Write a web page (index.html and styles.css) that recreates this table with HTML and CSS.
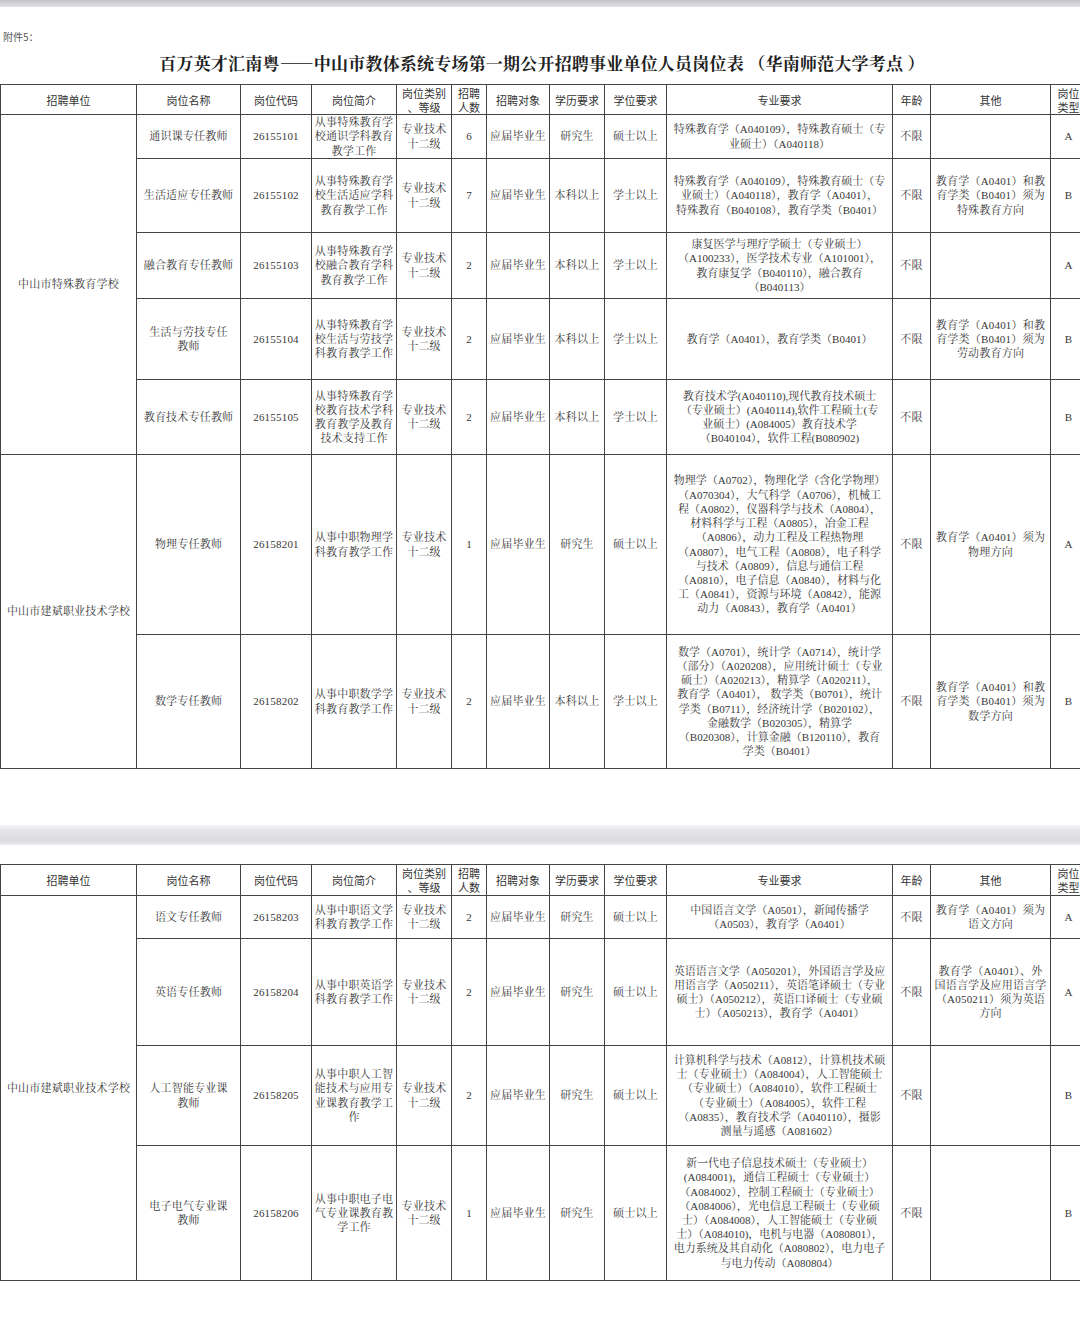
FILE: index.html
```html
<!DOCTYPE html>
<html lang="zh-CN">
<head>
<meta charset="utf-8">
<title>岗位表</title>
<link rel="stylesheet" href="styles.css">
</head>
<body>
<div class="sheet">
  <div class="topbar"></div>
  <p class="note">附件5：</p>
  <h1 class="title">百万英才汇南粤——中山市教体系统专场第一期公开招聘事业单位人员岗位表 （华南师范大学考点 ）</h1>

  <table class="grid">
    <colgroup>
      <col class="c1"><col class="c2"><col class="c3"><col class="c4"><col class="c5"><col class="c6"><col class="c7"><col class="c8"><col class="c9"><col class="c10"><col class="c11"><col class="c12"><col class="c13">
    </colgroup>
    <thead>
      <tr class="hd1">
        <th>招聘单位</th><th>岗位名称</th><th>岗位代码</th><th>岗位简介</th><th>岗位类别<br>、等级</th><th>招聘<br>人数</th><th>招聘对象</th><th>学历要求</th><th>学位要求</th><th>专业要求</th><th>年龄</th><th>其他</th><th>岗位<br>类型</th>
      </tr>
    </thead>
    <tbody>
      <tr class="r1">
        <td rowspan="5">中山市特殊教育学校</td>
        <td>通识课专任教师</td><td>26155101</td>
        <td>从事特殊教育学<br>校通识学科教育<br>教学工作</td>
        <td>专业技术<br>十二级</td><td>6</td><td>应届毕业生</td><td>研究生</td><td>硕士以上</td>
        <td class="major">特殊教育学（A040109），特殊教育硕士（专<br>业硕士）（A040118）</td>
        <td>不限</td><td></td><td>A</td>
      </tr>
      <tr class="r2">
        <td>生活适应专任教师</td><td>26155102</td>
        <td>从事特殊教育学<br>校生活适应学科<br>教育教学工作</td>
        <td>专业技术<br>十二级</td><td>7</td><td>应届毕业生</td><td>本科以上</td><td>学士以上</td>
        <td class="major">特殊教育学（A040109），特殊教育硕士（专<br>业硕士）（A040118），教育学（A0401），<br>特殊教育（B040108），教育学类（B0401）</td>
        <td>不限</td><td>教育学（A0401）和教<br>育学类（B0401）须为<br>特殊教育方向</td><td>B</td>
      </tr>
      <tr class="r3">
        <td>融合教育专任教师</td><td>26155103</td>
        <td>从事特殊教育学<br>校融合教育学科<br>教育教学工作</td>
        <td>专业技术<br>十二级</td><td>2</td><td>应届毕业生</td><td>本科以上</td><td>学士以上</td>
        <td class="major">康复医学与理疗学硕士（专业硕士）<br>（A100233），医学技术专业（A101001），<br>教育康复学（B040110），融合教育<br>（B040113）</td>
        <td>不限</td><td></td><td>A</td>
      </tr>
      <tr class="r4">
        <td>生活与劳技专任<br>教师</td><td>26155104</td>
        <td>从事特殊教育学<br>校生活与劳技学<br>科教育教学工作</td>
        <td>专业技术<br>十二级</td><td>2</td><td>应届毕业生</td><td>本科以上</td><td>学士以上</td>
        <td class="major">教育学（A0401），教育学类（B0401）</td>
        <td>不限</td><td>教育学（A0401）和教<br>育学类（B0401）须为<br>劳动教育方向</td><td>B</td>
      </tr>
      <tr class="r5">
        <td>教育技术专任教师</td><td>26155105</td>
        <td>从事特殊教育学<br>校教育技术学科<br>教育教学及教育<br>技术支持工作</td>
        <td>专业技术<br>十二级</td><td>2</td><td>应届毕业生</td><td>本科以上</td><td>学士以上</td>
        <td class="major">教育技术学(A040110),现代教育技术硕士<br>（专业硕士）(A040114),软件工程硕士(专<br>业硕士）(A084005）教育技术学<br>（B040104），软件工程(B080902)</td>
        <td>不限</td><td></td><td>B</td>
      </tr>
      <tr class="r6">
        <td rowspan="2">中山市建斌职业技术学校</td>
        <td>物理专任教师</td><td>26158201</td>
        <td>从事中职物理学<br>科教育教学工作</td>
        <td>专业技术<br>十二级</td><td>1</td><td>应届毕业生</td><td>研究生</td><td>硕士以上</td>
        <td class="major">物理学（A0702），物理化学（含化学物理）<br>（A070304），大气科学（A0706），机械工<br>程（A0802），仪器科学与技术（A0804），<br>材料科学与工程（A0805），冶金工程<br>（A0806），动力工程及工程热物理<br>（A0807），电气工程（A0808），电子科学<br>与技术（A0809），信息与通信工程<br>（A0810），电子信息（A0840），材料与化<br>工（A0841），资源与环境（A0842），能源<br>动力（A0843），教育学（A0401）</td>
        <td>不限</td><td>教育学（A0401）须为<br>物理方向</td><td>A</td>
      </tr>
      <tr class="r7">
        <td>数学专任教师</td><td>26158202</td>
        <td>从事中职数学学<br>科教育教学工作</td>
        <td>专业技术<br>十二级</td><td>2</td><td>应届毕业生</td><td>本科以上</td><td>学士以上</td>
        <td class="major">数学（A0701），统计学（A0714），统计学<br>（部分）（A020208），应用统计硕士（专业<br>硕士）（A020213），精算学（A020211），<br>教育学（A0401）， 数学类（B0701），统计<br>学类（B0711），经济统计学（B020102），<br>金融数学（B020305），精算学<br>（B020308），计算金融（B120110），教育<br>学类（B0401）</td>
        <td>不限</td><td>教育学（A0401）和教<br>育学类（B0401）须为<br>数学方向</td><td>B</td>
      </tr>
    </tbody>
  </table>

  <div class="sep"></div>

  <table class="grid grid2">
    <colgroup>
      <col class="c1"><col class="c2"><col class="c3"><col class="c4"><col class="c5"><col class="c6"><col class="c7"><col class="c8"><col class="c9"><col class="c10"><col class="c11"><col class="c12"><col class="c13">
    </colgroup>
    <thead>
      <tr class="hd2">
        <th>招聘单位</th><th>岗位名称</th><th>岗位代码</th><th>岗位简介</th><th>岗位类别<br>、等级</th><th>招聘<br>人数</th><th>招聘对象</th><th>学历要求</th><th>学位要求</th><th>专业要求</th><th>年龄</th><th>其他</th><th>岗位<br>类型</th>
      </tr>
    </thead>
    <tbody>
      <tr class="s1">
        <td rowspan="4">中山市建斌职业技术学校</td>
        <td>语文专任教师</td><td>26158203</td>
        <td>从事中职语文学<br>科教育教学工作</td>
        <td>专业技术<br>十二级</td><td>2</td><td>应届毕业生</td><td>研究生</td><td>硕士以上</td>
        <td class="major">中国语言文学（A0501），新闻传播学<br>（A0503），教育学（A0401）</td>
        <td>不限</td><td>教育学（A0401）须为<br>语文方向</td><td>A</td>
      </tr>
      <tr class="s2">
        <td>英语专任教师</td><td>26158204</td>
        <td>从事中职英语学<br>科教育教学工作</td>
        <td>专业技术<br>十二级</td><td>2</td><td>应届毕业生</td><td>研究生</td><td>硕士以上</td>
        <td class="major">英语语言文学（A050201），外国语言学及应<br>用语言学（A050211），英语笔译硕士（专业<br>硕士）（A050212），英语口译硕士（专业硕<br>士）（A050213），教育学（A0401）</td>
        <td>不限</td><td>教育学（A0401）、外<br>国语言学及应用语言学<br>（A050211）须为英语<br>方向</td><td>A</td>
      </tr>
      <tr class="s3">
        <td>人工智能专业课<br>教师</td><td>26158205</td>
        <td>从事中职人工智<br>能技术与应用专<br>业课教育教学工<br>作</td>
        <td>专业技术<br>十二级</td><td>2</td><td>应届毕业生</td><td>研究生</td><td>硕士以上</td>
        <td class="major">计算机科学与技术（A0812），计算机技术硕<br>士（专业硕士）（A084004），人工智能硕士<br>（专业硕士）（A084010），软件工程硕士<br>（专业硕士）（A084005），软件工程<br>（A0835），教育技术学（A040110），摄影<br>测量与遥感（A081602）</td>
        <td>不限</td><td></td><td>B</td>
      </tr>
      <tr class="s4">
        <td>电子电气专业课<br>教师</td><td>26158206</td>
        <td>从事中职电子电<br>气专业课教育教<br>学工作</td>
        <td>专业技术<br>十二级</td><td>1</td><td>应届毕业生</td><td>研究生</td><td>硕士以上</td>
        <td class="major">新一代电子信息技术硕士（专业硕士）<br>(A084001)，通信工程硕士（专业硕士）<br>（A084002），控制工程硕士（专业硕士）<br>（A084006），光电信息工程硕士（专业硕<br>士）（A084008），人工智能硕士（专业硕<br>士）（A084010)，电机与电器（A080801），<br>电力系统及其自动化（A080802），电力电子<br>与电力传动（A080804）</td>
        <td>不限</td><td></td><td>B</td>
      </tr>
    </tbody>
  </table>
</div>
</body>
</html>
```

FILE: styles.css
```css
html, body {
  margin: 0;
  padding: 0;
  background: #ffffff;
  overflow: hidden;
}

.sheet {
  width: 1080px;
  height: 1326px;
  overflow: hidden;
}

.topbar {
  height: 7px;
  background: linear-gradient(#c4c4c9, #e2e2e6);
}

.note {
  margin: 24px 0 0 3px;
  font: 10px/12px "Noto Sans CJK SC", sans-serif;
  color: #555555;
}

.title {
  margin: 9px 0 0;
  padding-left: 4px;
  text-align: center;
  font: 700 17px/22px "Noto Serif CJK SC", "Noto Sans CJK SC", serif;
  letter-spacing: 0.2px;
  color: #202020;
}

.grid {
  margin-top: 10px;
  width: 1086px;
  table-layout: fixed;
  border-collapse: collapse;
  font: 11px/14.2px "Liberation Serif", "Noto Serif CJK SC", "Noto Sans CJK SC", serif;
  color: #383838;
}

.grid2 {
  margin-top: 19px;
}

.grid th,
.grid td {
  border: 1px solid #444444;
  padding: 0 1px;
  text-align: center;
  vertical-align: middle;
  white-space: nowrap;
  overflow: hidden;
}

.grid th {
  font-family: "Noto Sans CJK SC", sans-serif;
  font-weight: 400;
  line-height: 14px;
  color: #333333;
}

.grid td {
  letter-spacing: 0.2px;
}

.grid td.major {
  letter-spacing: 0;
}

.c1 { width: 136px; }
.c2 { width: 104px; }
.c3 { width: 71px; }
.c4 { width: 85px; }
.c5 { width: 55px; }
.c6 { width: 35px; }
.c7 { width: 63px; }
.c8 { width: 55px; }
.c9 { width: 62px; }
.c10 { width: 226px; }
.c11 { width: 38px; }
.c12 { width: 120px; }
.c13 { width: 36px; }

.hd1 { height: 30px; }
.r1 { height: 44px; }
.r2 { height: 74px; }
.r3 { height: 66px; }
.r4 { height: 81px; }
.r5 { height: 75px; }
.r6 { height: 180px; }
.r7 { height: 134px; }

.sep {
  margin-top: 56px;
  height: 20px;
  background: linear-gradient(#f6f6f8 0%, #e4e4e8 30%, #dcdce0 80%, #eeeef0 100%);
}

.hd2 { height: 31px; }
.s1 { height: 43px; }
.s2 { height: 107px; }
.s3 { height: 100px; }
.s4 { height: 135px; }
```
